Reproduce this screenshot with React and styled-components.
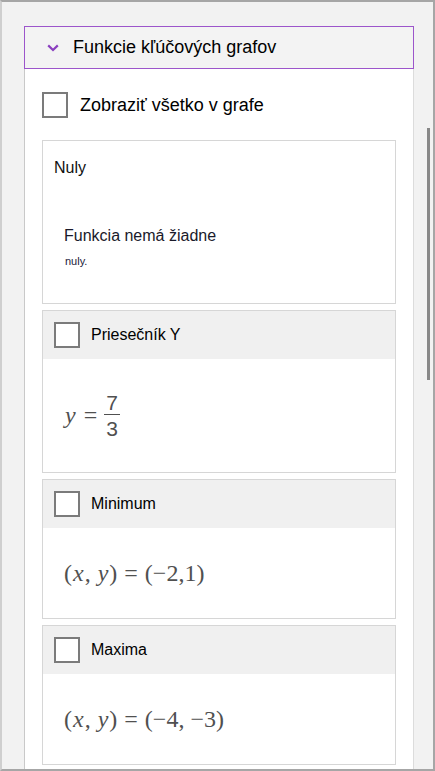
import React from "react";
import styled, { createGlobalStyle } from "styled-components";

const GlobalStyle = createGlobalStyle`
  * { box-sizing: border-box; }
  html, body { margin: 0; padding: 0; background: #f2f2f2; }
  body { font-family: "Segoe UI", "Liberation Sans", Arial, sans-serif; color: #111; }
`;

const Frame = styled.div`
  width: 435px;
  height: 771px;
  display: flex;
  background: #f2f2f2;
  border-top: 2px solid #a6a6a6;
  border-right: 2px solid #a6a6a6;
  border-bottom: 2px solid #a6a6a6;
  border-left: 2px solid #cfcfcf;
  overflow: hidden;
`;

const Column = styled.div`
  width: 412px;
  display: flex;
  flex-direction: column;
  padding: 24px 0 0 22px;
`;

const Header = styled.div`
  height: 43px;
  flex: none;
  display: flex;
  align-items: center;
  gap: 14px;
  padding-left: 22px;
  background: #f3f3f3;
  border: 1.5px solid #9c55cb;
  font-size: 18px;
  color: #000;
  svg { flex: none; }
`;

const Panel = styled.div`
  flex: 1;
  background: #fff;
  border-left: 1px solid #c9c9c9;
  border-right: 1px solid #dcdcdc;
  padding: 23px 17px 0 17px;
  display: flex;
  flex-direction: column;
  overflow: hidden;
`;

const ShowAll = styled.label`
  height: 26px;
  flex: none;
  display: flex;
  align-items: center;
  gap: 12px;
  font-size: 18px;
  color: #000;
  margin-bottom: 22px;
`;

const Box = styled.span`
  width: 26px;
  height: 26px;
  flex: none;
  background: #fff;
  border: 2px solid #7b7b7b;
`;

const Card = styled.div`
  flex: none;
  border: 1px solid #d6d6d6;
  margin-bottom: 6px;
  background: #fff;
`;

const Zeros = styled(Card)`
  height: 164px;
  padding: 16px 0 0 11px;
`;

const ZerosTitle = styled.div`
  font-size: 16px;
  line-height: 22px;
  color: #111;
`;

const ZerosText = styled.div`
  margin: 46px 0 0 10px;
  font-size: 16px;
  line-height: 22px;
  color: #1a1a2a;
`;

const ZerosSmall = styled.div`
  margin: 8px 0 0 11px;
  font-size: 11px;
  color: #1a1a3a;
`;

const CardHead = styled.div`
  height: 48px;
  display: flex;
  align-items: center;
  gap: 11px;
  padding-left: 11px;
  background: #f0f0f0;
  font-size: 16px;
  color: #000;
`;

const CardBody = styled.div`
  height: ${(p) => p.$h}px;
  display: flex;
  align-items: center;
  padding-left: 21px;
  font-family: "Cambria Math", "Liberation Serif", "DejaVu Serif", serif;
  font-size: 24px;
  color: #505050;
`;

const V = styled.i`
  font-style: italic;
  margin: 0 1px;
`;

const Op = styled.span`
  margin: 0 7px;
`;

const Frac = styled.span`
  display: inline-flex;
  flex-direction: column;
  align-items: center;
  font-family: "Liberation Sans", Arial, sans-serif;
  font-size: 21px;
  line-height: 22px;
  span + span { border-top: 1.5px solid #505050; padding-top: 3px; }
  span { padding: 0 2px; }
`;

const Track = styled.div`
  flex: 1;
  padding: 126px 0 0 13px;
`;

const Thumb = styled.div`
  width: 3px;
  height: 252px;
  background: #888;
`;

const Chevron = () => (
  <svg width="12" height="8" viewBox="0 0 12 8">
    <path d="M1.2 1.4 L6 6 L10.8 1.4" fill="none" stroke="#8a3fbf" strokeWidth="2.2" />
  </svg>
);

const features = [
  {
    title: "Priesečník Y",
    h: 113,
    math: (
      <>
        <V>y</V>
        <Op>=</Op>
        <Frac>
          <span>7</span>
          <span>3</span>
        </Frac>
      </>
    ),
  },
  {
    title: "Minimum",
    h: 90,
    math: (
      <>
        (<V>x</V>,{"\u00a0"}<V>y</V>)<Op>=</Op>(−2,1)
      </>
    ),
  },
  {
    title: "Maxima",
    h: 90,
    math: (
      <>
        (<V>x</V>,{"\u00a0"}<V>y</V>)<Op>=</Op>(−4,{"\u00a0"}−3)
      </>
    ),
  },
];

export default function App() {
  return (
    <>
      <GlobalStyle />
      <Frame>
        <Column>
          <Header>
            <Chevron />
            Funkcie kľúčových grafov
          </Header>
          <Panel>
            <ShowAll>
              <Box />
              Zobraziť všetko v grafe
            </ShowAll>
            <Zeros>
              <ZerosTitle>Nuly</ZerosTitle>
              <ZerosText>Funkcia nemá žiadne</ZerosText>
              <ZerosSmall>nuly.</ZerosSmall>
            </Zeros>
            {features.map((f) => (
              <Card key={f.title}>
                <CardHead>
                  <Box />
                  {f.title}
                </CardHead>
                <CardBody $h={f.h}>{f.math}</CardBody>
              </Card>
            ))}
          </Panel>
        </Column>
        <Track>
          <Thumb />
        </Track>
      </Frame>
    </>
  );
}
